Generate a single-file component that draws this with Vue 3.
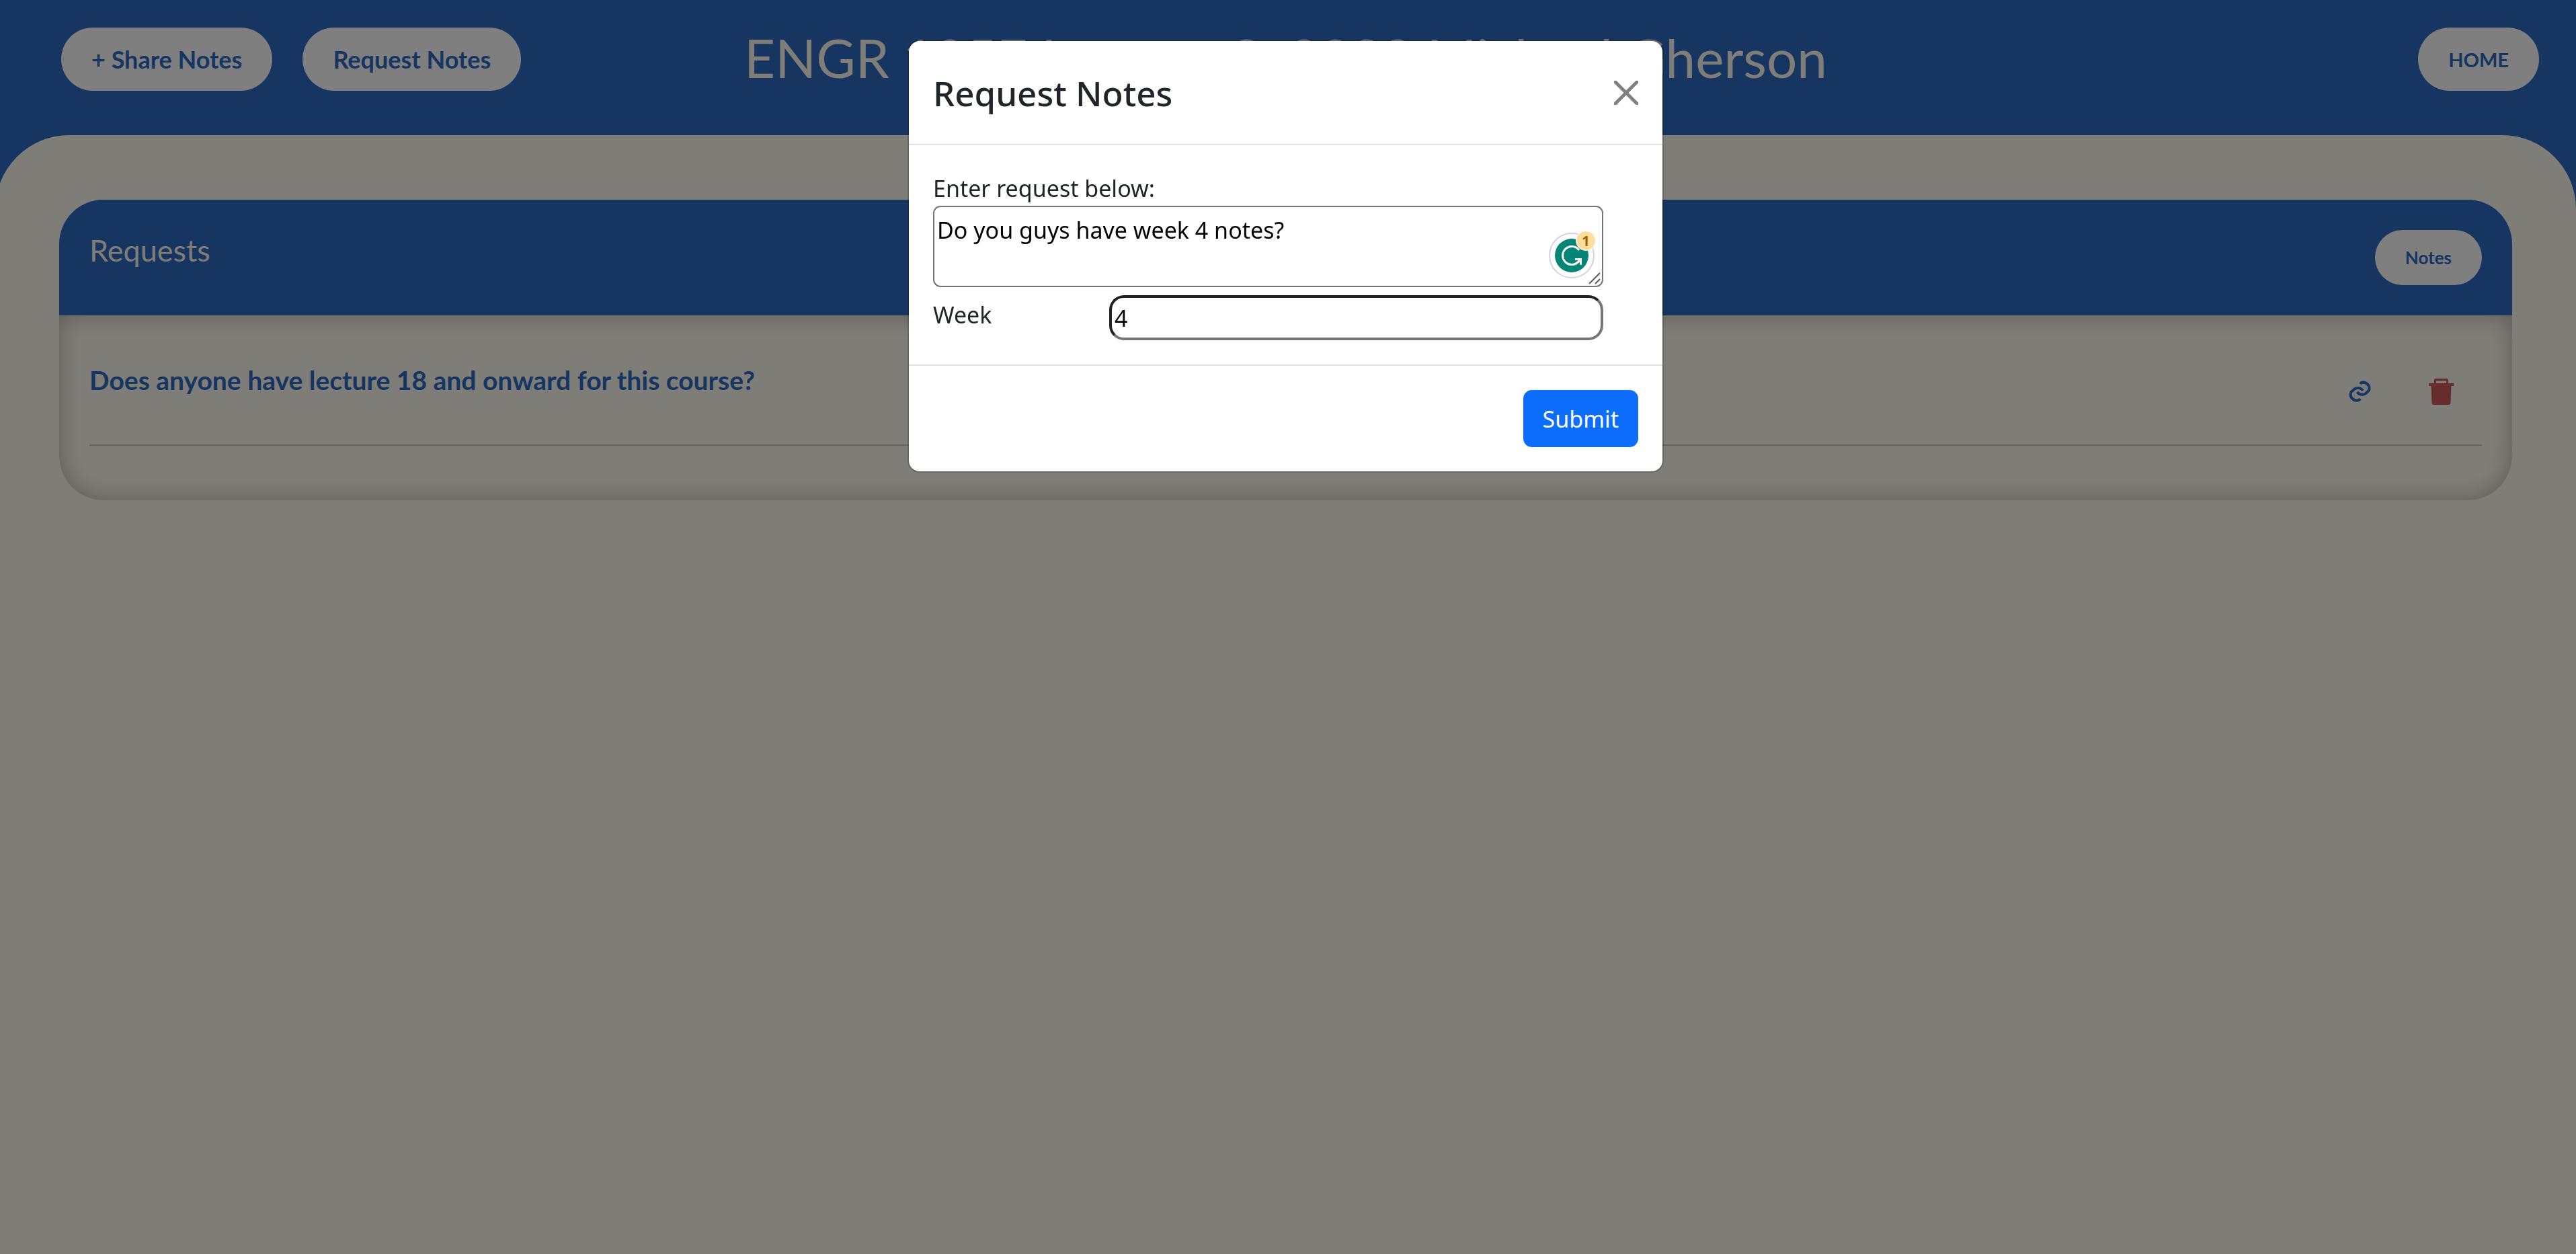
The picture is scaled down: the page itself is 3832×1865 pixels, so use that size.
<script setup>
import { ref } from 'vue'

const request = ref('Do you guys have week 4 notes?')
const week = ref('4')
const requests = [
  { id: 1, text: 'Does anyone have lecture 18 and onward for this course?' },
]
</script>

<template>
  <div class="page">
    <header class="topbar">
      <div class="actions start">
        <button type="button" class="pill">+ Share Notes</button>
        <button type="button" class="pill">Request Notes</button>
      </div>
      <h1 class="course">ENGR 185E Lecture 2, 2022 Michael Gherson</h1>
      <div class="actions end">
        <a href="#" class="pill home">HOME</a>
      </div>
    </header>

    <main class="panel">
      <section class="card">
        <div class="card-head">
          <h2>Requests</h2>
          <button type="button" class="pill small">Notes</button>
        </div>
        <ul class="card-body">
          <li v-for="item in requests" :key="item.id" class="item">
            <p>{{ item.text }}</p>
            <div class="tools">
              <button type="button" class="icon" aria-label="Link">
                <svg class="link" viewBox="0 0 36 36" fill="none" stroke="currentColor" stroke-width="4">
                  <path d="M18 7 L19.5 5.2 A9 9 0 0 1 31 16.5 L26.5 21 A9 9 0 0 1 13.5 19" />
                  <path d="M18 29 L16.5 30.8 A9 9 0 0 1 4.500 19 L9.500 14.500 A9 9 0 0 1 22 17" />
                </svg>
              </button>
              <button type="button" class="icon" aria-label="Delete">
                <svg class="trash" viewBox="0 0 37 39" fill="currentColor">
                  <path fill-rule="evenodd" d="M8 7V3Q8 0 11 0H26Q29 0 29 3V7H37V11H33.500L32.500 36Q32.300 39 29.500 39H7.500Q4.700 39 4.500 36L3.500 11H0V7ZM11 7H26V3.500H11Z" />
                </svg>
              </button>
            </div>
          </li>
        </ul>
      </section>
    </main>

    <div class="backdrop">
      <form class="modal" role="dialog" aria-labelledby="modal-title" @submit.prevent>
        <div class="modal-head">
          <h2 id="modal-title">Request Notes</h2>
          <button type="button" class="close" aria-label="Close">
            <svg viewBox="0 0 36 36" stroke="#808080" stroke-width="5" stroke-linecap="round">
              <path d="M2 2 L34 34 M34 2 L2 34" />
            </svg>
          </button>
        </div>

        <div class="modal-body">
          <label for="request">Enter request below:</label>
          <div class="area">
            <textarea id="request" v-model="request"></textarea>
            <svg class="grip" viewBox="0 0 18 18" stroke="#5a5a5a" stroke-width="2">
              <path d="M1 17 L17 1 M10 17 L17 10" />
            </svg>
            <div class="checker">
              <svg viewBox="0 0 68 68" fill="none">
                <circle cx="34" cy="34" r="33" fill="#fff" stroke="#d0d3e0" stroke-width="2" />
                <circle cx="34" cy="34" r="25" fill="#048575" />
                <path d="M45 26 A13.500 13.500 0 1 0 45 42" stroke="#fff" stroke-width="3" />
                <path d="M39 39.500 H47.500 V48 M47 40 L42 45" stroke="#fff" stroke-width="3" />
              </svg>
              <span class="count">1</span>
            </div>
          </div>
          <div class="week">
            <label for="week">Week</label>
            <input id="week" v-model="week" type="text" inputmode="numeric" />
          </div>
        </div>

        <div class="modal-foot">
          <button type="submit" class="submit">Submit</button>
        </div>
      </form>
    </div>
  </div>
</template>

<style>
body {
  margin: 0;
  background: #fdfbef;
}
</style>

<style scoped>
* {
  box-sizing: border-box;
}

.page {
  min-height: 100vh;
  padding-right: 7px;
  background: linear-gradient(#2c6ac3 400px, #fdfbef 400px);
  color: #2c6ac3;
  font-family: Lato, sans-serif;
  overflow: hidden;
}

button,
input,
textarea {
  font: inherit;
  color: inherit;
}

h1,
h2,
p {
  margin: 0;
}

.topbar {
  display: grid;
  grid-template-columns: 1fr auto 1fr;
  align-items: start;
  padding: 41px 48px 66px;
  column-gap: 40px;
}

.actions {
  display: flex;
  gap: 45px;
}

.start {
  padding-left: 43px;
}

.end {
  justify-content: flex-end;
}

.pill {
  display: flex;
  align-items: center;
  height: 94px;
  padding: 0 45px;
  border: 0;
  border-radius: 47px;
  background: #fff;
  font-size: 36px;
  font-weight: 700;
  text-decoration: none;
  color: #2c6ac3;
  white-space: nowrap;
}

.home {
  font-size: 29px;
}

.small {
  height: 82px;
  font-size: 26px;
}

.course {
  font-size: 80px;
  line-height: 88px;
  font-weight: 400;
  color: #fdfbef;
  white-space: nowrap;
}

.panel {
  min-height: calc(100vh - 201px);
  margin: 0 -7px;
  padding: 96px 95px;
  border-radius: 110px 110px 0 0;
  background: #fdfbef;
}

.card {
  border-radius: 66px;
  overflow: hidden;
}

.card-head {
  display: flex;
  justify-content: space-between;
  align-items: flex-start;
  height: 172px;
  padding: 45px;
  background: #2c6ac3;
}

.card-head h2 {
  font-size: 45px;
  line-height: 60px;
  font-weight: 400;
  color: #fdfbef;
}

.card-body {
  margin: 0;
  padding: 45px 45px 81px;
  list-style: none;
  border-radius: 0 0 66px 66px;
  box-shadow: inset 0 0 34px rgba(0, 0, 0, 0.28);
}

.item {
  display: flex;
  justify-content: space-between;
  height: 149px;
  padding-top: 24px;
  border-bottom: 2px solid #cac6bc;
}

.item p {
  font-size: 39px;
  line-height: 54px;
  font-weight: 700;
}

.tools {
  display: flex;
  gap: 84px;
  height: 88px;
  padding-right: 42px;
  align-items: center;
}

.icon,
.close {
  display: flex;
  padding: 0;
  border: 0;
  background: none;
}

.link {
  width: 36px;
  height: 36px;
  color: #2c6ac3;
}

.trash {
  width: 37px;
  height: 39px;
  color: #ce5b5b;
}

.backdrop {
  position: fixed;
  inset: 0;
  display: flex;
  justify-content: center;
  align-items: flex-start;
  padding: 59px 7px 59px 0;
  background: rgba(0, 0, 0, 0.5);
}

.modal {
  width: 1125px;
  max-width: 100%;
  border: 2px solid rgba(0, 0, 0, 0.18);
  border-radius: 18px;
  background: #fff;
  background-clip: padding-box;
  color: #212529;
  font-family: "Segoe UI", "Noto Sans", sans-serif;
  font-size: 34px;
  line-height: 54px;
}

.modal-head {
  display: flex;
  justify-content: space-between;
  align-items: center;
  padding: 36px;
  border-bottom: 2px solid #dee2e6;
}

.modal-head h2 {
  padding-top: 2px;
  font-size: 51px;
  line-height: 79px;
  font-weight: 500;
}

.close svg {
  width: 36px;
  height: 36px;
}

.modal-body {
  display: flex;
  flex-direction: column;
  padding: 38px 88px 36px 36px;
}

.modal-body > label {
  line-height: 52px;
}

.area {
  position: relative;
  display: flex;
}

textarea {
  width: 100%;
  height: 121px;
  padding: 7px 4px;
  border: 2px solid #767676;
  border-radius: 11px;
  background: #fff;
  color: #000;
  resize: none;
}

.grip {
  position: absolute;
  right: 4px;
  bottom: 4px;
  width: 18px;
  height: 18px;
}

.checker {
  position: absolute;
  right: 13px;
  bottom: 13px;
  width: 68px;
  height: 68px;
}

.checker svg {
  display: block;
}

.count {
  position: absolute;
  top: -3px;
  right: -2px;
  width: 30px;
  height: 30px;
  border: 1px solid #fff;
  border-radius: 50%;
  background: #ffdd9c;
  color: #9a6200;
  font-size: 21px;
  font-weight: 700;
  line-height: 28px;
  text-align: center;
}

.week {
  display: grid;
  grid-template-columns: 262px 1fr;
  margin-top: 12px;
}

.week label {
  line-height: 58px;
}

.week input {
  width: 100%;
  height: 67px;
  padding: 0 4px;
  border: 4px solid;
  border-color: #212121 #767676 #767676 #212121;
  border-radius: 22px;
  background: #fff;
  color: #000;
}

.modal-foot {
  display: flex;
  justify-content: flex-end;
  padding: 36px;
  border-top: 2px solid #dee2e6;
}

.submit {
  height: 85px;
  padding: 0 29px;
  border: 0;
  border-radius: 13px;
  background: #0d6efd;
  color: #fff;
}
</style>
